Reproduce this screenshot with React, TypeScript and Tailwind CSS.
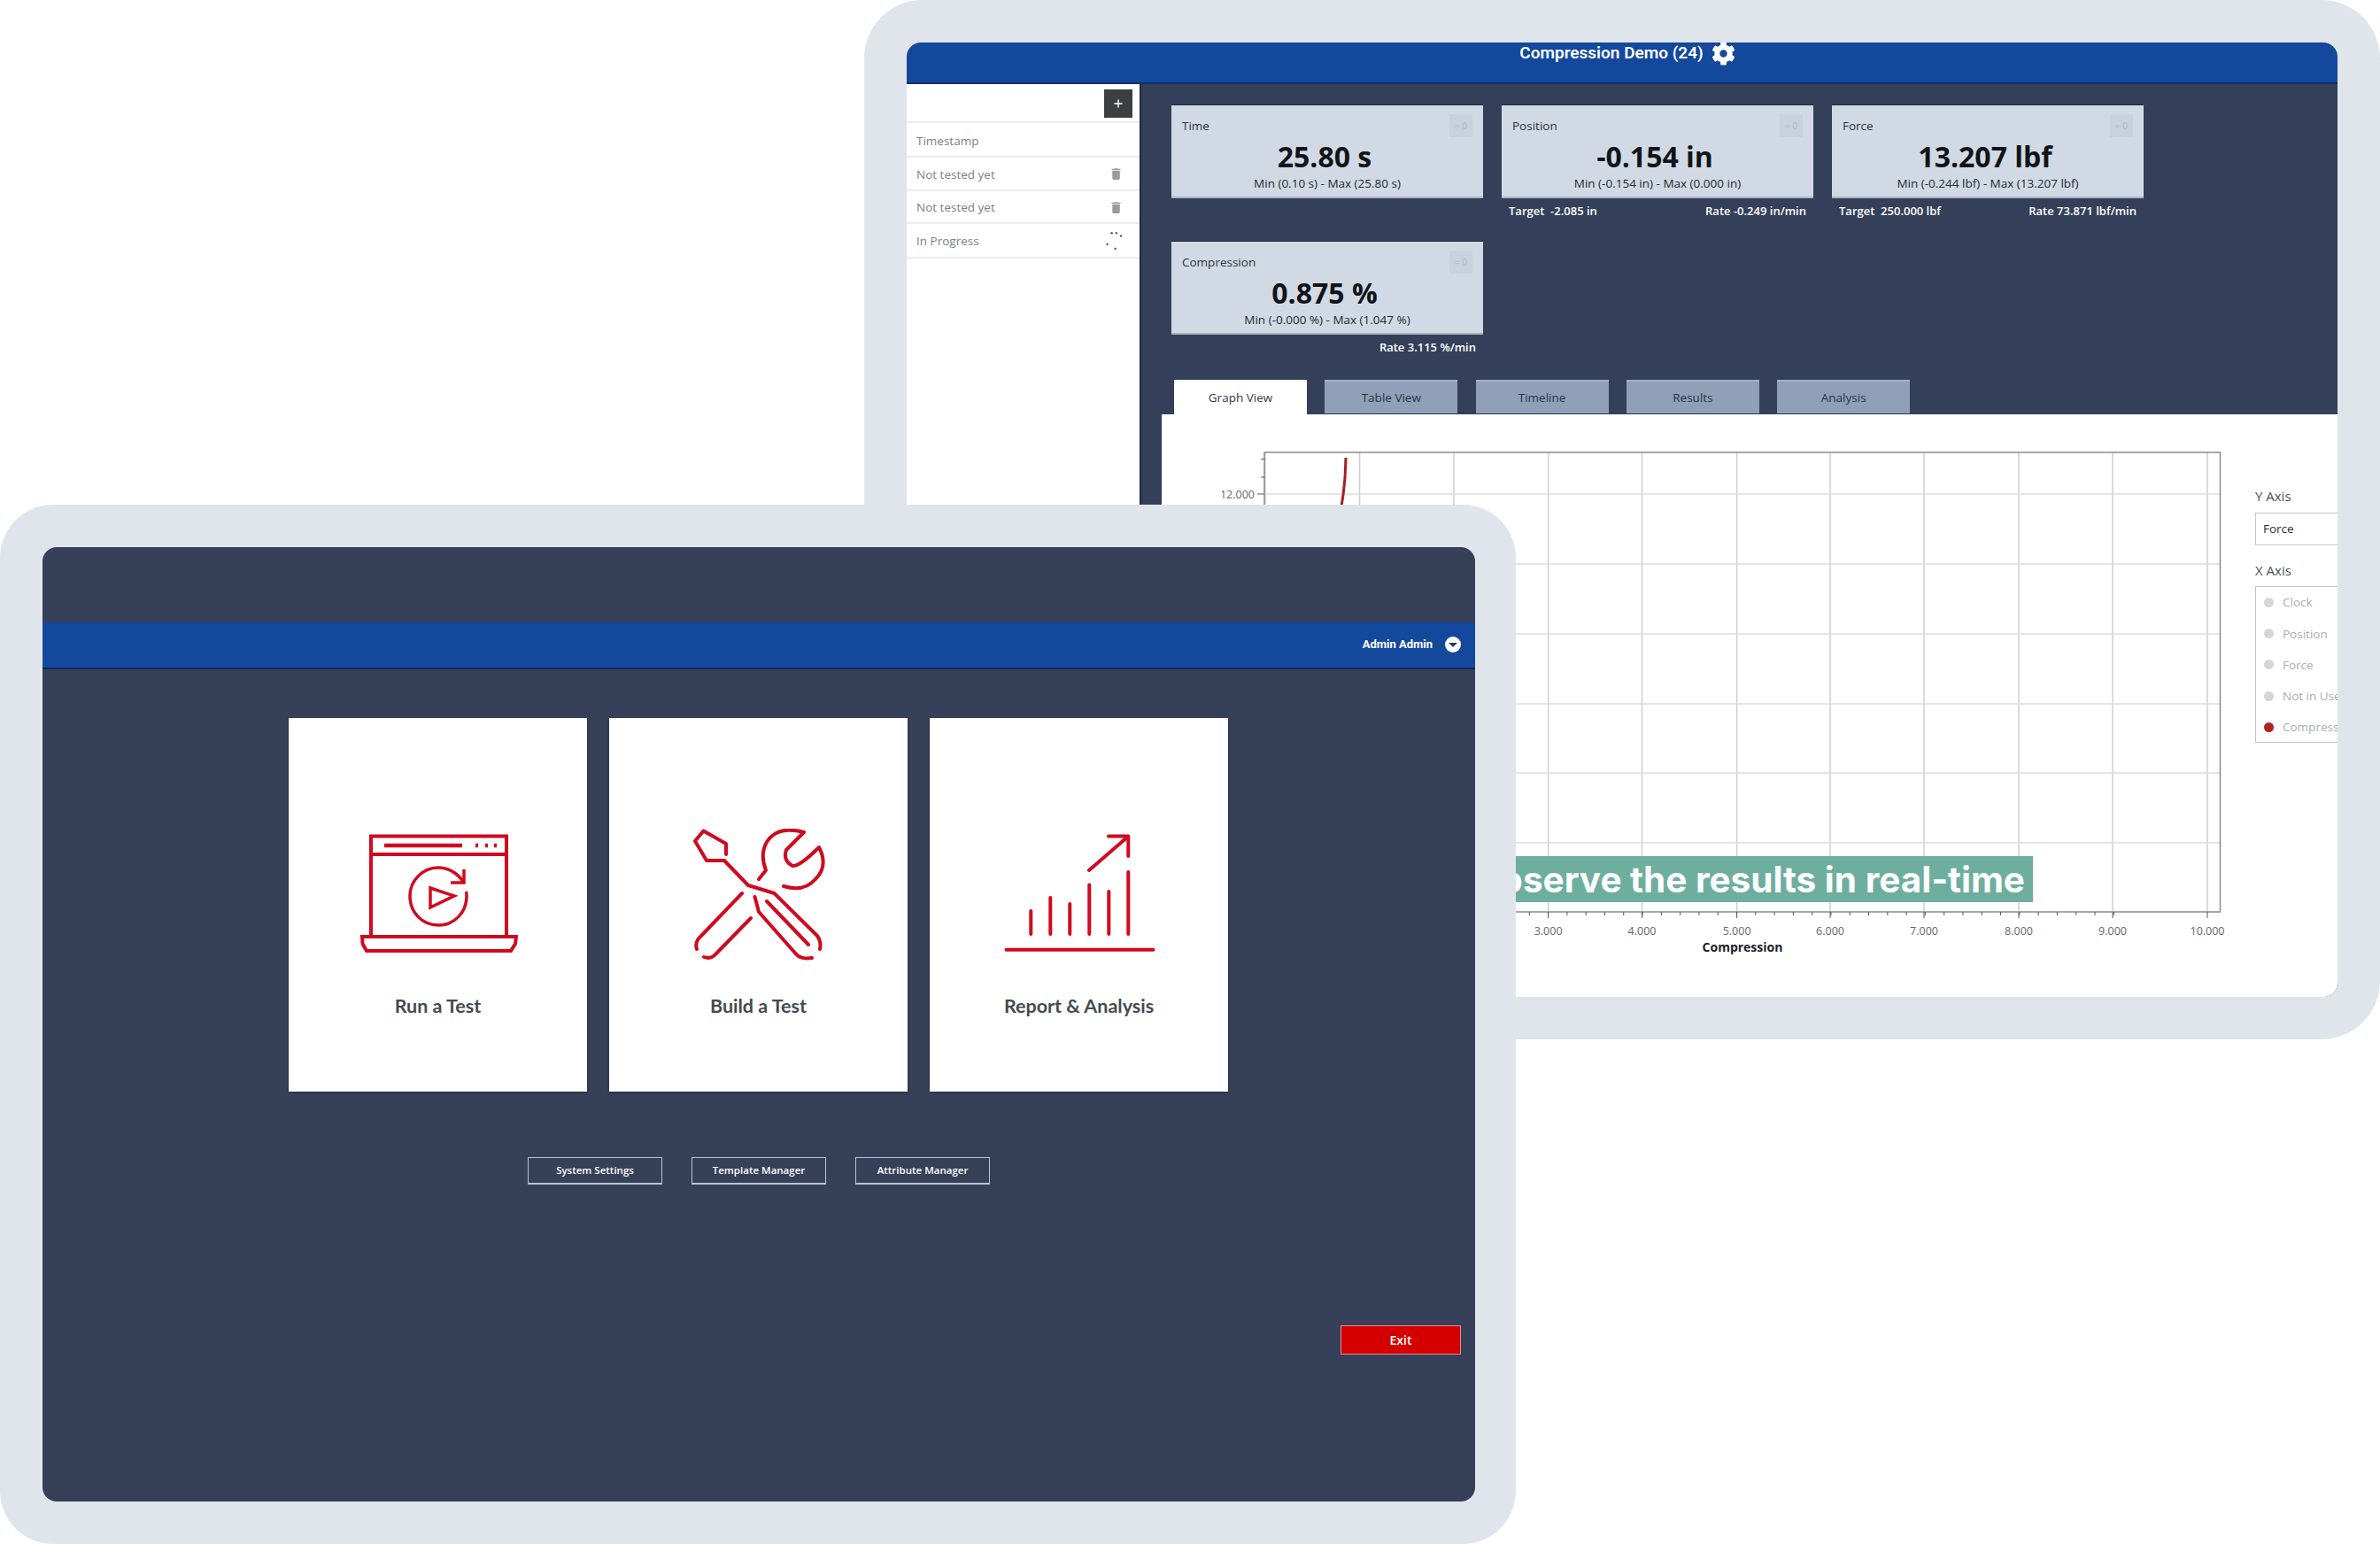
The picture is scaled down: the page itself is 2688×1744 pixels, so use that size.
import { Plus } from "lucide-react";
import { FaCog } from "react-icons/fa";
import { MdDelete } from "react-icons/md";

const stats = [
  { title: "Time", value: "25.80 s", range: "Min (0.10 s) - Max (25.80 s)", target: "", rate: "" },
  { title: "Position", value: "-0.154 in", range: "Min (-0.154 in) - Max (0.000 in)", target: "Target  -2.085 in", rate: "Rate -0.249 in/min" },
  { title: "Force", value: "13.207 lbf", range: "Min (-0.244 lbf) - Max (13.207 lbf)", target: "Target  250.000 lbf", rate: "Rate 73.871 lbf/min" },
  { title: "Compression", value: "0.875 %", range: "Min (-0.000 %) - Max (1.047 %)", target: "", rate: "Rate 3.115 %/min" },
];

const tabs = ["Table View", "Timeline", "Results", "Analysis"];
const xAxisItems = ["Clock", "Position", "Force", "Not in Use", "Compression"];
const xGrid = [1429, 1535.5, 1642, 1748.6, 1854.5, 1961.6, 2067, 2173, 2280, 2386, 2493];
const yGrid = [558, 637, 716, 795, 873, 952];

function StatCard({ title, value, range, target, rate }: (typeof stats)[number]) {
  return (
    <div>
      <div className="h-[106px] bg-[#d1dae4] border-t border-t-[#1d2738] border-b-2 border-b-[#aab4c1] relative">
        <div className="absolute left-3 top-[14px] text-[13.5px] leading-[18px] text-[#2b3137]">{title}</div>
        <div className="absolute right-[12px] top-[10px] w-[26px] h-[26px] bg-[#c8d1dc] flex items-center justify-center text-[10px] text-[#aeb8c5]">
          = 0
        </div>
        <div className="pt-[36px] pr-[6px] text-center text-[32px] leading-[44px] font-bold text-[#111418]">{value}</div>
        <div className="text-center text-[13.5px] leading-[18px] -mt-px text-[#23282e]">{range}</div>
      </div>
      <div className="flex justify-between px-2 pt-[5px] text-[13px] leading-[18px] font-semibold text-white whitespace-pre">
        <span>{target}</span>
        <span>{rate}</span>
      </div>
    </div>
  );
}

function Chart() {
  const minorX = Array.from({ length: 36 }, (_, i) => 1748.6 + (i - 5) * 21.29);
  const minorY = [518.6, 539, 558];
  return (
    <svg width="1160" height="590" viewBox="1380 500 1160 590" className="shrink-0">
      {xGrid.map((x) => (
        <line key={x} x1={x} x2={x} y1="511" y2="1030" stroke="#cfcfcf" strokeWidth="1.5" />
      ))}
      {yGrid.map((y) => (
        <line key={y} x1="1428" x2="2507" y1={y} y2={y} stroke="#dcdcdc" strokeWidth="1.5" />
      ))}
      <path d="M1428 1030V511H2507.5V1030Z" fill="none" stroke="#8a8a8a" strokeWidth="1.5" />
      {minorX.map((x) => (
        <line key={x} x1={x} x2={x} y1="1030" y2="1034" stroke="#555" strokeWidth="1" />
      ))}
      {xGrid.slice(3).map((x) => (
        <line key={x} x1={x} x2={x} y1="1030" y2="1037" stroke="#555" strokeWidth="1" />
      ))}
      {minorY.map((y) => (
        <line key={y} x1={y === 558 ? 1420 : 1424} x2="1428" y1={y} y2={y} stroke="#555" strokeWidth="1" />
      ))}
      <text x="1417" y="563" textAnchor="end" fontSize="12.5" fill="#666">12.000</text>
      {xGrid.slice(3).map((x, i) => (
        <text key={x} x={x} y="1056" textAnchor="middle" fontSize="12.5" fill="#666">
          {`${i + 3}.000`}
        </text>
      ))}
      <text x="1968" y="1075" textAnchor="middle" fontSize="14" fontWeight="700" fill="#1c2026">Compression</text>
      <path d="M1520 517L1519 540L1517 559L1514.5 575" fill="none" stroke="#a81c22" strokeWidth="3" />
    </svg>
  );
}

function RunIcon() {
  return (
    <svg width="180" height="150" viewBox="404 936 180 150" fill="none" stroke="#cf0a20" strokeWidth="4">
      <path d="M418 1058V944.5H571V1058" />
      <path d="M418 965H571" />
      <path d="M433 955H521" strokeWidth="4.5" />
      <path d="M536 955h3M547 955h3M557 955h3" strokeWidth="4.5" />
      <path d="M408 1058H582L581 1066L576 1074H413L408.5 1066Z" />
      <path d="M523 997C516 986 505 980 494 980C476 980 462 995 462 1012C462 1031 476 1045 494 1045C512 1045 526 1031 526 1012C526 1010 526 1009 525.5 1007" strokeWidth="3.5" />
      <path d="M523 982V997H508" strokeWidth="3.5" />
      <path d="M485 1003L512 1012L485 1025Z" strokeWidth="3.5" />
    </svg>
  );
}

function BuildIcon() {
  return (
    <svg width="180" height="150" viewBox="767 936 180 150" fill="none" stroke="#cf0a20" strokeWidth="4" strokeLinecap="round" strokeLinejoin="round">
      <path d="M820 965V953L794.5 938.5L785 950L798 972H818L845 1000L874.5 1009L923 1057Q928 1064 926 1072" />
      <path d="M852.5 1013L857 1030L898.5 1077Q904 1084 917 1082" />
      <path d="M866 1018L913 1067" />
      <path d="M838 1009L792 1057Q784 1064 787 1072" />
      <path d="M848 1037L809 1077Q803 1084 795 1081" />
      <path d="M857 993L865 983Q858 965 866 951Q878 932 908 940L888 960Q884 972 895 978Q903 979 925 957Q936 978 921 993Q908 1008 885 1001" />
    </svg>
  );
}

function ReportIcon() {
  return (
    <svg width="180" height="150" viewBox="1129 936 180 150" fill="none" stroke="#cf0a20" strokeWidth="4" strokeLinecap="round" strokeLinejoin="round">
      <path d="M1136.5 1072.7H1302.5" />
      <path d="M1164.3 1029V1055M1186.3 1014V1055M1208.3 1021V1055M1230.3 999.5V1055M1252.3 1007V1055M1274.3 985V1055" />
      <path d="M1230 983L1274 945M1252 944.5H1274.3V967" />
    </svg>
  );
}

const cards = [
  { label: "Run a Test", icon: <RunIcon /> },
  { label: "Build a Test", icon: <BuildIcon /> },
  { label: "Report & Analysis", icon: <ReportIcon /> },
];

export default function App() {
  return (
    <div className="relative w-[2688px] h-[1744px] overflow-hidden bg-white font-['Open_Sans','Noto_Sans',sans-serif]">
      {/* Back window */}
      <div className="absolute left-[976px] top-0 w-[1712px] h-[1174px] rounded-[66px] bg-[#e0e5ec] p-[48px]">
        <div className="h-[1078px] rounded-[16px] overflow-hidden flex flex-col">
          <header className="h-[47px] shrink-0 bg-[#14489c] border-b-2 border-b-[#0f2f6b] flex items-start justify-center pl-[12px] gap-[9px] font-['Roboto',sans-serif]">
            <span className="text-[19px] leading-[24px] font-semibold text-white">Compression Demo (24)</span>
            <FaCog className="text-white w-[27px] h-[27px] -mt-px" />
          </header>

          <div className="flex-1 flex min-h-0">
            {/* Test list */}
            <aside className="w-[265px] shrink-0 bg-white border-r-2 border-r-[#1e2a40]">
              <div className="h-[44px] flex items-start justify-end pt-[6px] pr-[8px] border-b-2 border-b-[#ececec]">
                <div className="w-8 h-8 bg-[#3c3f3f] flex items-center justify-center">
                  <Plus className="w-[14px] h-[14px] text-white" strokeWidth={2.5} />
                </div>
              </div>
              <div className="h-[39px] flex items-center pl-[11px] pt-[3px] border-b-2 border-b-[#ececec] text-[13.5px] text-[#7b7f83]">Timestamp</div>
              {["Not tested yet", "Not tested yet"].map((t, i) => (
                <div key={i} className="h-[37.5px] flex items-center justify-between pl-[11px] pr-[18px] pt-[2px] border-b-2 border-b-[#ececec] text-[13.5px] text-[#7b7f83]">
                  {t}
                  <MdDelete className="w-[17px] h-[17px] text-[#9a9a9a]" />
                </div>
              ))}
              <div className="h-[39px] flex items-center justify-between pl-[11px] pr-[18px] pt-[2px] border-b-2 border-b-[#ececec] text-[13.5px] text-[#7b7f83]">
                In Progress
                <svg width="20" height="24" viewBox="1249 261 20 24" fill="#55585c">
                  <circle cx="1255.6" cy="263.3" r="1.2" />
                  <circle cx="1260.8" cy="263.3" r="1.2" />
                  <circle cx="1266" cy="266.5" r="1.2" />
                  <circle cx="1250.5" cy="276" r="1.2" />
                  <circle cx="1259.6" cy="281" r="1.2" />
                </svg>
              </div>
            </aside>

            {/* Main column */}
            <main className="flex-1 min-w-0 bg-[#344059] flex flex-col">
              <div className="pl-[34px] pt-[23px] h-[334px] shrink-0">
                <div className="grid grid-cols-[352px_352px_352px] gap-x-[21px] grid-rows-[154px_auto]">
                  {stats.map((s) => (
                    <StatCard key={s.title} {...s} />
                  ))}
                </div>
              </div>

              <div className="flex gap-[20.3px] pl-[37px] h-[39px] shrink-0">
                <div className="w-[150px] bg-white flex items-center justify-center text-[13.5px] text-[#33393f] pt-px">Graph View</div>
                {tabs.map((t) => (
                  <div key={t} className="w-[150px] bg-[#8fa0b8] border-t-2 border-t-[#a3b1c4] border-b border-b-[#2a3650] flex items-center justify-center text-[13.5px] text-[#2b3440]">
                    {t}
                  </div>
                ))}
              </div>

              {/* Graph panel */}
              <div className="flex-1 min-h-0 ml-[23px] bg-white relative overflow-hidden flex pl-[68px] pt-[32px]">
                <Chart />
                <div className="ml-[7px] pt-[50px] w-[120px] shrink-0 text-[13.5px]">
                  <div className="text-[15px] leading-[20px] text-[#4a5056]">Y Axis</div>
                  <div className="mt-[9px] h-[37px] border border-[#c4c4c4] flex items-center pl-2 text-[#2a2e33] whitespace-nowrap">Force</div>
                  <div className="mt-[18px] text-[15px] leading-[20px] text-[#4a5056]">X Axis</div>
                  <div className="mt-[8px] h-[177px] border border-[#c4c4c4] pl-[9px] whitespace-nowrap">
                    {xAxisItems.map((item, i) => (
                      <div key={item} className="h-[35.2px] flex items-center gap-[10px] text-[#a9acb0]">
                        <span className={i === 4 ? "w-[11px] h-[11px] rounded-full bg-[#b3201f]" : "w-[11px] h-[11px] rounded-full bg-[#d4d6d8]"} />
                        {item}
                      </div>
                    ))}
                  </div>
                </div>

                {/* Caption laid over the chart */}
                <div className="absolute left-[300px] top-[499px] w-[684px] h-[52px] bg-[#6eae9e] flex items-center justify-end pr-[9px] pt-[2px] font-['Inter',sans-serif] text-[40.5px] font-bold text-white whitespace-nowrap">
                  Observe the results in real-time
                </div>
              </div>
            </main>
          </div>
        </div>
      </div>

      {/* Front window */}
      <div className="absolute left-0 top-[570px] w-[1712px] h-[1174px] rounded-[60px] bg-[#e0e5ec] pl-[48px] pr-[46px] py-[48px]">
        <div className="h-[1078px] rounded-[16px] overflow-hidden bg-[#374059] flex flex-col">
          <div className="h-[85px] shrink-0" />
          <div className="h-[53px] shrink-0 bg-[#14489c] border-b-2 border-b-[#0f2a5e] flex items-center justify-end pr-[16px] pb-px font-['Roboto',sans-serif]">
            <span className="text-[13px] font-bold text-white">Admin Admin</span>
            <span className="ml-[14px] w-[18px] h-[18px] rounded-full bg-white flex items-center justify-center">
              <span className="w-0 h-0 border-x-[5px] border-x-transparent border-t-[5px] border-t-[#2b3a5c]" />
            </span>
          </div>

          <div className="mt-[55px] flex justify-center gap-[25px] pr-px">
            {cards.map((c) => (
              <div key={c.label} className="w-[337px] h-[422px] bg-white flex flex-col items-center pt-[125px] shadow-[0_1px_3px_rgba(0,0,0,0.3)]">
                {c.icon}
                <div className="mt-[36px] text-[21.5px] leading-[28px] font-['Lato',sans-serif] font-bold text-[#444b50]">{c.label}</div>
              </div>
            ))}
          </div>

          <div className="mt-[74px] flex justify-center gap-[33px]">
            {["System Settings", "Template Manager", "Attribute Manager"].map((b) => (
              <div key={b} className="w-[152px] h-[31px] border border-[#b9c3d2] border-b-2 flex items-center justify-center text-[11.5px] font-semibold text-white">
                {b}
              </div>
            ))}
          </div>

          <div className="mt-[159px] flex justify-end pr-[16px]">
            <div className="w-[136px] h-[33px] bg-[#d40000] border border-[#e58b90] flex items-center justify-center text-[14px] font-semibold text-white">Exit</div>
          </div>
        </div>
      </div>
    </div>
  );
}
